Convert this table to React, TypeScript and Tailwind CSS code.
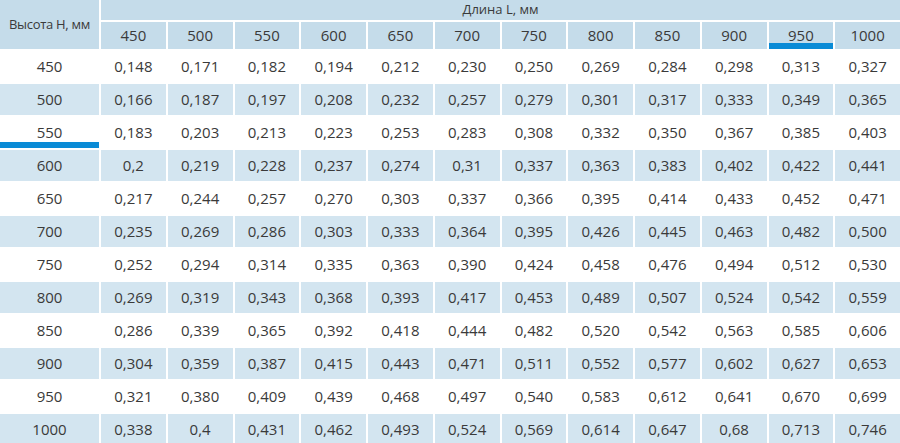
const lengths = ['450', '500', '550', '600', '650', '700', '750', '800', '850', '900', '950', '1000'];

const rows: [string, string[]][] = [
  ['450', ['0,148', '0,171', '0,182', '0,194', '0,212', '0,230', '0,250', '0,269', '0,284', '0,298', '0,313', '0,327']],
  ['500', ['0,166', '0,187', '0,197', '0,208', '0,232', '0,257', '0,279', '0,301', '0,317', '0,333', '0,349', '0,365']],
  ['550', ['0,183', '0,203', '0,213', '0,223', '0,253', '0,283', '0,308', '0,332', '0,350', '0,367', '0,385', '0,403']],
  ['600', ['0,2', '0,219', '0,228', '0,237', '0,274', '0,31', '0,337', '0,363', '0,383', '0,402', '0,422', '0,441']],
  ['650', ['0,217', '0,244', '0,257', '0,270', '0,303', '0,337', '0,366', '0,395', '0,414', '0,433', '0,452', '0,471']],
  ['700', ['0,235', '0,269', '0,286', '0,303', '0,333', '0,364', '0,395', '0,426', '0,445', '0,463', '0,482', '0,500']],
  ['750', ['0,252', '0,294', '0,314', '0,335', '0,363', '0,390', '0,424', '0,458', '0,476', '0,494', '0,512', '0,530']],
  ['800', ['0,269', '0,319', '0,343', '0,368', '0,393', '0,417', '0,453', '0,489', '0,507', '0,524', '0,542', '0,559']],
  ['850', ['0,286', '0,339', '0,365', '0,392', '0,418', '0,444', '0,482', '0,520', '0,542', '0,563', '0,585', '0,606']],
  ['900', ['0,304', '0,359', '0,387', '0,415', '0,443', '0,471', '0,511', '0,552', '0,577', '0,602', '0,627', '0,653']],
  ['950', ['0,321', '0,380', '0,409', '0,439', '0,468', '0,497', '0,540', '0,583', '0,612', '0,641', '0,670', '0,699']],
  ['1000', ['0,338', '0,4', '0,431', '0,462', '0,493', '0,524', '0,569', '0,614', '0,647', '0,68', '0,713', '0,746']],
];

export default function App() {
  return (
    <div className="w-[900px] h-[443px] overflow-hidden bg-white text-[#3a3a3a] font-['Open_Sans',sans-serif]">
      <div className="grid grid-cols-[99px_repeat(12,1fr)] grid-rows-[20px_27px] auto-rows-[31px] gap-[2px]">
        {/* header */}
        <div className="row-span-2 bg-[#c5dcea] flex items-center justify-center text-[13px] tracking-[-0.3px] whitespace-nowrap">
          Высота Н, мм
        </div>
        <div className="col-span-12 bg-[#c5dcea] flex items-center justify-center text-[13px]">
          Длина L, мм
        </div>
        {lengths.map(l => (
          <div
            key={l}
            className={
              l === '950'
                ? 'bg-[#c5dcea] flex items-center justify-center text-[15px] border-b-[6px] border-[#0a8bd6] pt-[6px]'
                : 'bg-[#c5dcea] flex items-center justify-center text-[15px]'
            }
          >
            {l}
          </div>
        ))}

        {/* body */}
        {rows.map(([h, vals], i) => {
          const bg = i % 2 === 1 ? 'bg-[#d3e5f0]' : 'bg-white';
          return [
            <div
              key={h}
              className={
                h === '550'
                  ? `${bg} flex items-center justify-center text-[15px] border-b-[6px] border-[#0a8bd6] pt-[6px]`
                  : `${bg} flex items-center justify-center text-[15px]`
              }
            >
              {h}
            </div>,
            ...vals.map((v, j) => (
              <div key={h + '-' + j} className={`${bg} flex items-center justify-center text-[15px]`}>
                {v}
              </div>
            )),
          ];
        })}
      </div>
    </div>
  );
}
